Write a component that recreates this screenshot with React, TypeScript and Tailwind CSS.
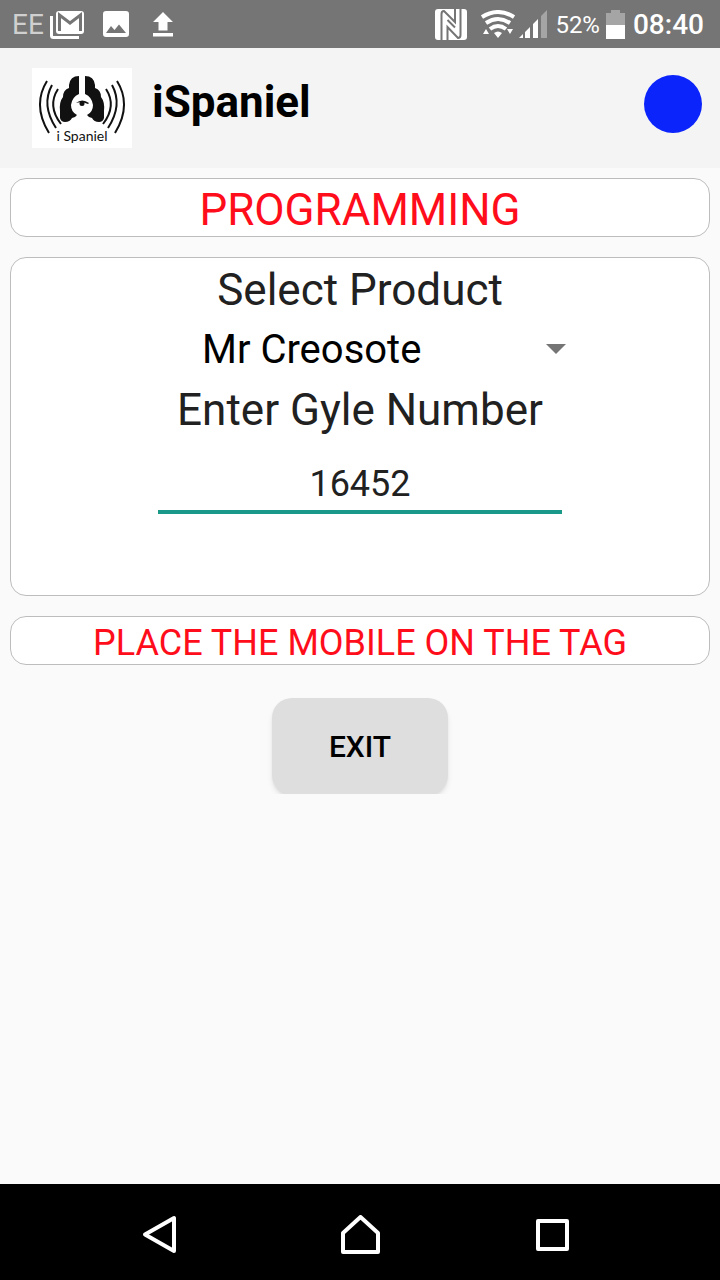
import React, { useState } from 'react';

const PRODUCTS = ['Mr Creosote', 'Black Knight', 'Holy Ale'];

const GmailIcon = () => (
  <svg width="35" height="29" viewBox="0 0 35 29" fill="none" aria-hidden="true">
    <path d="M1.5 6V25.5Q1.5 27.5 3.5 27.5H29" stroke="#fff" strokeWidth="3" />
    <rect x="6" y="1" width="28" height="23" rx="3" fill="#fff" />
    <path d="M9.5 21V5L20 13L30.500 5V21" stroke="#757575" strokeWidth="3" />
  </svg>
);

const ImageIcon = () => (
  <svg width="26" height="26" viewBox="0 0 26 26" aria-hidden="true">
    <rect width="26" height="26" rx="3" fill="#fff" />
    <path d="M3 22L8 15L11.500 19L16 13.500L23 22Z" fill="#757575" />
  </svg>
);

const UploadIcon = () => (
  <svg width="20" height="25" viewBox="0 0 20 25" fill="#fff" aria-hidden="true">
    <path d="M10 0L20 10H14.500V18.500H5.500V10H0ZM0 21H20V24.500H0Z" />
  </svg>
);

const NfcIcon = () => (
  <svg width="32" height="31" viewBox="0 0 32 31" aria-hidden="true">
    <rect width="32" height="31" rx="3" fill="#fff" />
    <g fill="none" stroke="#757575" strokeWidth="2">
      <path d="M6.500 31V5Q6.500 2 9 2L20 13V0" />
      <path d="M25.500 0V26Q25.500 29 23 29L12.500 18V31" />
      <path d="M12.500 11L20 18.500" />
    </g>
  </svg>
);

const WifiIcon = () => (
  <svg width="34" height="28" viewBox="0 0 34 28" aria-hidden="true">
    <g fill="none" stroke="#fff" strokeWidth="4">
      <path d="M1 7Q17 -3 33 7" />
      <path d="M5 13Q17 5 29 13" />
      <path d="M9 19Q17 13 25 19" />
    </g>
    <path d="M13 23Q17 20 21 23L17 28ZM2 24L5 19L8 24ZM26 19H32L29 24Z" fill="#fff" />
  </svg>
);

const SignalIcon = () => (
  <svg width="28" height="28" viewBox="0 0 28 28" fill="#fff" aria-hidden="true">
    <path d="M0 28L4 24V28ZM6 22L11 17V28H6ZM14 14L19 9V28H14Z" />
    <path d="M22 6L28 0V28H22Z" fillOpacity="0.35" />
  </svg>
);

const BatteryIcon = () => (
  <svg width="19" height="29" viewBox="0 0 19 29" fill="#fff" aria-hidden="true">
    <path d="M5 0H14V3H19V15H0V3H5Z" fillOpacity="0.35" />
    <path d="M0 15H19V29H0Z" />
  </svg>
);

const EarAndWaves = () => (
  <>
    <path
      d="M47 8Q38 8 37 17L37 20Q31 22 31 29Q27 34 28 43V50Q29 54 33 54Q38 54 40 50Q43 50 45 47Q39 44 39 37Q40 29 47 26Z"
      fill="#111"
    />
    <g fill="none" stroke="#111" strokeWidth="2">
      <path d="M15 13Q0 37 17 65" />
      <path d="M20 17Q9 37 24 60" />
      <path d="M26 21Q15 38 29 56" />
    </g>
  </>
);

const Logo = () => (
  <svg width="100" height="80" viewBox="0 0 100 80" role="img" aria-label="iSpaniel logo">
    <rect width="100" height="80" fill="#fff" />
    <EarAndWaves />
    <g transform="translate(100 0) scale(-1 1)">
      <EarAndWaves />
    </g>
    <path d="M44 35Q50 30 57 35L56 36Q50 33 44 35Z" fill="#111" />
    <circle cx="50" cy="35.500" r="2.500" fill="#111" />
    <text x="50" y="73" textAnchor="middle" fontSize="14" fill="#111" className="font-['Lato',sans-serif]">
      i Spaniel
    </text>
  </svg>
);

const StatusBar = () => (
  <div className="flex h-12 items-center justify-between bg-[#757575] pl-3 pr-4 text-white">
    <div className="flex items-center">
      <span className="mr-1.5 pt-0.5 text-[28px] text-[#d0d0d0]">EE</span>
      <GmailIcon />
      <span className="ml-4.5">
        <ImageIcon />
      </span>
      <span className="ml-6">
        <UploadIcon />
      </span>
    </div>
    <div className="flex items-center">
      <NfcIcon />
      <span className="ml-3.5">
        <WifiIcon />
      </span>
      <span className="ml-1">
        <SignalIcon />
      </span>
      <span className="ml-2 pt-0.5 text-2xl">52%</span>
      <span className="ml-1.5">
        <BatteryIcon />
      </span>
      <span className="ml-2 pt-0.5 text-[28px] font-medium">08:40</span>
    </div>
  </div>
);

const Header = () => (
  <header className="flex h-30 items-center bg-[#f4f4f4] pl-8 pr-4">
    <Logo />
    <h1 className="ml-5 pb-3 text-[44px] font-bold leading-[52px] text-black">iSpaniel</h1>
    <span className="mb-2 ml-auto mr-0.5 size-[58px] rounded-full bg-[#0b24fb]" />
  </header>
);

const NavBar = () => (
  <nav className="flex h-24 items-center justify-center gap-34 bg-black pt-1.5">
    <button type="button" aria-label="Back">
      <svg width="56" height="40" viewBox="0 0 56 40" fill="none" stroke="#fff" strokeWidth="4" strokeLinejoin="round">
        <path d="M34 3V36L5 19.500Z" />
      </svg>
    </button>
    <button type="button" aria-label="Home">
      <svg width="56" height="40" viewBox="0 0 56 40" fill="none" stroke="#fff" strokeWidth="4" strokeLinejoin="round">
        <path d="M28.500 2L46 18V37H11V18Z" />
      </svg>
    </button>
    <button type="button" aria-label="Recent apps">
      <svg width="56" height="40" viewBox="0 0 56 40" fill="none" stroke="#fff" strokeWidth="4" strokeLinejoin="round">
        <rect x="14" y="6" width="29" height="28" />
      </svg>
    </button>
  </nav>
);

const App: React.FC = () => {
  const [product, setProduct] = useState(PRODUCTS[0]);
  const [gyle, setGyle] = useState('16452');

  return (
    <div className="flex min-h-screen flex-col bg-[#fafafa] font-['Roboto',sans-serif] text-[#212121]">
      <StatusBar />
      <Header />

      <main className="flex flex-1 flex-col gap-5 px-2.5 pt-2.5">
        <p className="rounded-2xl border border-[#bdbdbd] bg-white pt-[5px] text-center text-[44px] leading-[52px] text-[#ff0d1b]">
          PROGRAMMING
        </p>

        <section className="flex flex-col items-center rounded-2xl border border-[#bdbdbd] bg-white pb-[81px] pt-0.5">
          <label htmlFor="product" className="text-[44px] leading-[60px]">
            Select Product
          </label>
          <div className="relative w-[412px] max-w-full">
            <select
              id="product"
              value={product}
              onChange={(e) => setProduct(e.target.value)}
              className="block h-[60px] w-full appearance-none bg-transparent pl-12 text-[40px] text-black outline-none"
            >
              {PRODUCTS.map((name) => (
                <option key={name} value={name}>
                  {name}
                </option>
              ))}
            </select>
            <svg
              width="20"
              height="10"
              viewBox="0 0 20 10"
              className="pointer-events-none absolute right-0 top-6"
              aria-hidden="true"
            >
              <path d="M0 0H20L10 10Z" fill="#757575" />
            </svg>
          </div>
          <label htmlFor="gyle" className="text-[44px] leading-[60px]">
            Enter Gyle Number
          </label>
          <input
            id="gyle"
            type="text"
            inputMode="numeric"
            value={gyle}
            onChange={(e) => setGyle(e.target.value)}
            className="mt-[18px] h-14 w-[404px] max-w-full border-b-4 border-[#1a998b] text-center text-4xl outline-none"
          />
        </section>

        <p className="rounded-2xl border border-[#bdbdbd] bg-white pt-[5px] text-center text-4xl leading-[42px] text-[#ff0d1b]">
          PLACE THE MOBILE ON THE TAG
        </p>

        <div className="mt-2 h-[101px] self-center overflow-hidden px-2 pt-[5px]">
          <button
            type="button"
            className="h-[97px] w-44 rounded-[20px] bg-[#dedede] text-[30px] font-medium text-black shadow-md"
          >
            EXIT
          </button>
        </div>
      </main>

      <NavBar />
    </div>
  );
};

export default App;
